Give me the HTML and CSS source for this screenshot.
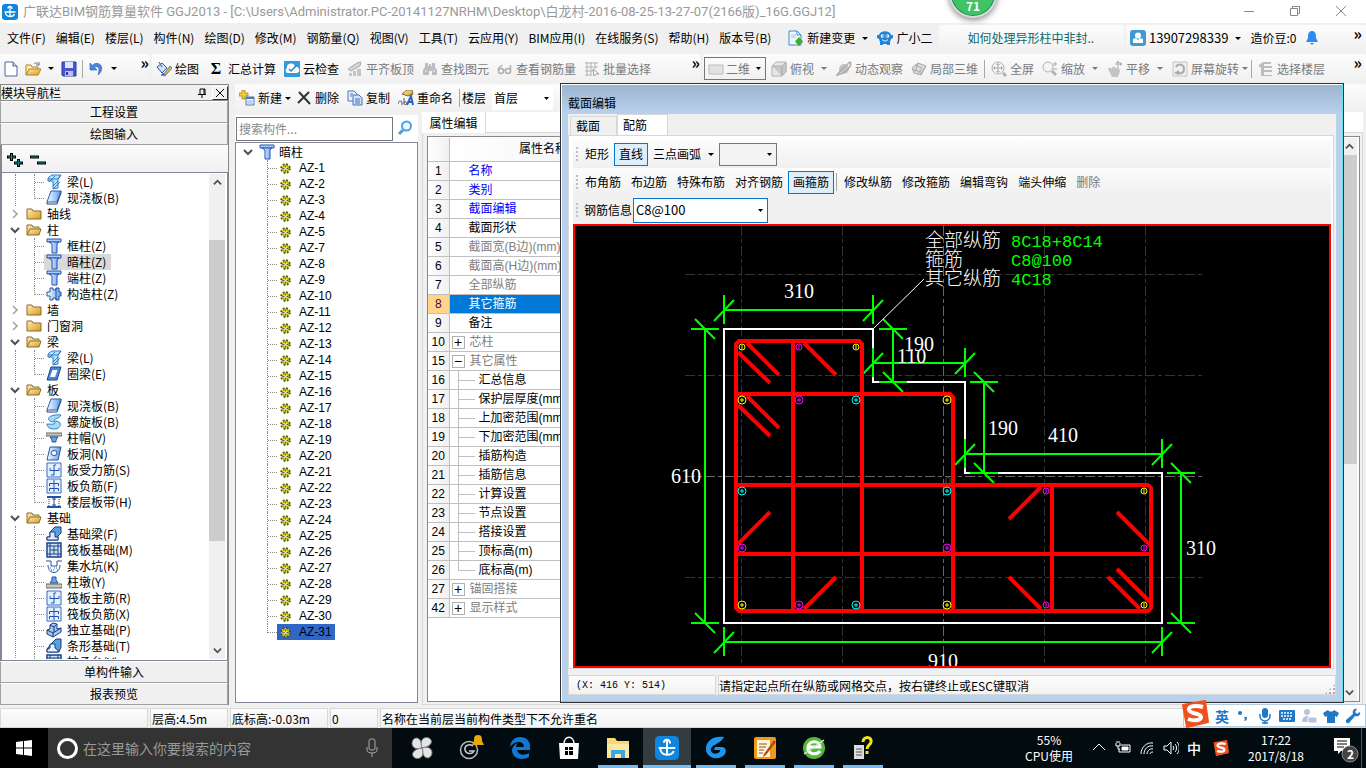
FILE: index.html
```
<!DOCTYPE html>
<html lang="zh-CN">
<head>
    <meta charset="UTF-8">
    <meta name="viewport" content="width=device-width, initial-scale=1.0">
    <title>广联达BIM钢筋算量软件 GGJ2013</title>
    <link rel="stylesheet" href="styles.css">
</head>
<body>
    <!-- Icon sprite -->
    <svg class="sprite" aria-hidden="true">
        <defs>
            <linearGradient id="gold" x1="0" y1="0" x2="1" y2="1"><stop offset="0" stop-color="#fff0b0"/><stop offset="1" stop-color="#d89820"/></linearGradient>
            <linearGradient id="blue" x1="0" y1="0" x2="1" y2="0"><stop offset="0" stop-color="#fff"/><stop offset="1" stop-color="#5a9cec"/></linearGradient>
        </defs>
        <symbol id="i-logo" viewBox="0 0 16 16"><rect width="16" height="16" rx="3" fill="#0e86e0"/><path d="M10 5V4.500a2 2 0 0 0-4 0M8 3v10M2.500 8h11M3.500 8c0 3 2 4.500 4.500 4.500s4-1 4.500-2.500" fill="none" stroke="#fff" stroke-width="1.300"/></symbol>
        <symbol id="i-new" viewBox="0 0 16 16"><path d="M2 1h8l4 4v10H2z" fill="#fff" stroke="#4a6796"/><path d="M10 1v4h4" fill="#c8daf2" stroke="#4a6796"/></symbol>
        <symbol id="i-open" viewBox="0 0 16 16"><path d="M1 14V4h5l1 2h6v2" fill="#fff0a8" stroke="#b08020"/><path d="M1 14l3-6h12l-3 6z" fill="url(#gold)" stroke="#b08020"/><path d="M9 3c2-2 4-1 5 1m0-3v3h-3" fill="none" stroke="#5878a0"/></symbol>
        <symbol id="i-save" viewBox="0 0 16 16"><path d="M1 1h14v14H2l-1-1z" fill="#4858d0" stroke="#2838a0"/><path d="M4 1h8v6H4z" fill="#dde6fa"/><path d="M4 10h8v5H4z" fill="#b8c4ee"/><path d="M5 11h2v3H5z" fill="#283890"/></symbol>
        <symbol id="i-undo" viewBox="0 0 16 16"><path d="M2 2v7h7L6.500 6.500c3-2 6 0 3.500 7.500 5-4 5-10 0-11.500C7.500 2 5.500 3 4.500 4.500z" fill="#4a86e0" stroke="#2c60b8" stroke-width=".6"/></symbol>
        <symbol id="i-draw" viewBox="0 0 16 16"><path d="M1 6l5-4 5 5-5 5z" fill="#cfe0f6" stroke="#335890"/><path d="M3 1l3 5" stroke="#335890"/><path d="M7 14l7-9 2 2-7 8z" fill="#e6b23a" stroke="#335890" stroke-width=".7"/><path d="M5 15c0-3 3-4 4-1z" fill="#2f66c0"/></symbol>
        <symbol id="i-cloud" viewBox="0 0 16 16"><rect width="16" height="16" rx="1" fill="#2f9be0"/><path d="M3 12a3 3 0 0 1 0-5 4 4 0 0 1 8-1 3 3 0 0 1 2 6z" fill="#fff"/><path d="M5 8l2 2 5-5" fill="none" stroke="#2f80d0" stroke-width="1.500"/></symbol>
        <symbol id="i-align" viewBox="0 0 16 16"><path d="M1 8l9-6 4-1-1 4-9 5z" fill="#d4d4d4" stroke="#aaa"/><path d="M2 12h3v3H2zM6 10h3v5H6zM10 8h4v7h-4z" fill="#c4c4c4"/></symbol>
        <symbol id="i-find" viewBox="0 0 16 16"><path d="M3 2h3v3h1V3h2v2h1V2h3v4l2 3v5h-5v-4H7v4H1V9l2-3z" fill="#bdbdbd"/><path d="M3 10h2m6 0h2" stroke="#eee"/></symbol>
        <symbol id="i-glasses" viewBox="0 0 16 16"><g fill="none" stroke="#b0b0b0" stroke-width="1.500"><circle cx="4" cy="10" r="2.500"/><circle cx="11" cy="10" r="2.500"/><path d="M6.500 9h2M1.500 10V7l4-3M13.500 10V4"/></g></symbol>
        <symbol id="i-batch" viewBox="0 0 16 16"><path d="M1 2h13M1 6h13M1 10h8M1 14h6M3 1v14M7 1v14M11 1v7" stroke="#b4b4b4" fill="none"/><path d="M9 8l6 5-3 0-2 2z" fill="#fff" stroke="#999"/></symbol>
        <symbol id="i-flat" viewBox="0 0 16 16"><path d="M1 4h14v9H1z" fill="#e2e2e2" stroke="#bbb"/></symbol>
        <symbol id="i-cube" viewBox="0 0 16 16"><path d="M1 5l4-4h10v10l-4 4H1z" fill="#e6e6e6" stroke="#b0b0b0"/><path d="M1 5h10v10M11 5l4-4v10l-4 4z" fill="#c8c8c8" stroke="#b0b0b0"/></symbol>
        <symbol id="i-orbit" viewBox="0 0 16 16"><circle cx="8" cy="8" r="5" fill="#c4c4c4"/><path d="M1 14C4 10 9 5 14 1c3 3-5 12-13 13z" fill="none" stroke="#aaa" stroke-width="1.500"/></symbol>
        <symbol id="i-local" viewBox="0 0 16 16"><path d="M1 7l6-5 8 3-5 9-7-2z" fill="#ddd" stroke="#aaa"/><path d="M4 4l7 3-4 6M1 8l9 3M7 2l-3 9M15 5l-6 9" fill="none" stroke="#aaa"/></symbol>
        <symbol id="i-full" viewBox="0 0 16 16"><circle cx="7" cy="7" r="6" fill="#f4f4f4" stroke="#b0b0b0"/><path d="M12 12l3 3" stroke="#b0b0b0" stroke-width="3"/><path d="M7 3v8M3 7h8" stroke="#aaa"/><path d="M7 2l-2 2h4zM7 12l-2-2h4zM2 7l2-2v4zM12 7l-2-2v4z" fill="#aaa"/></symbol>
        <symbol id="i-zoom" viewBox="0 0 16 16"><circle cx="6" cy="6" r="5" fill="#f4f4f4" stroke="#b4b4b4"/><path d="M10 10l4 4" stroke="#b4b4b4" stroke-width="3"/><path d="M13 1v4M11 3h4M11 8h4" stroke="#aaa"/></symbol>
        <symbol id="i-pan" viewBox="0 0 16 16"><path d="M1 8c1-2 3-1 4 0 0-3 3-3 3-1 2-1 5 0 5 3l-2 6H5z" fill="#c4c4c4"/><path d="M11 0v7M8 3h7" stroke="#aaa"/><path d="M11 0l-2 2h4zM15 3l-2-2v4z" fill="#aaa"/></symbol>
        <symbol id="i-rotate" viewBox="0 0 16 16"><path d="M1 1h14v14H1z" fill="#f0f0f0" stroke="#c4c4c4"/><path d="M4 6c2-4 8-3 8 2s-5 5-7 3" fill="none" stroke="#aaa" stroke-width="2"/><path d="M2 12l5-3v5z" fill="#aaa"/></symbol>
        <symbol id="i-floor" viewBox="0 0 16 16"><path d="M1 4l4-3h8v2H6v2h8v2H6v2h8v2H6v3h8v1H3V6H1z" fill="#bcbcbc"/></symbol>
        <symbol id="i-change" viewBox="0 0 16 16"><path d="M1 1h8l4 4v10H1z" fill="#f2f8ff" stroke="#3f8cc8"/><path d="M3 5h5M3 7h5" stroke="#9cc6e8"/><path d="M9 1v4h4" fill="none" stroke="#3f8cc8"/><path d="M11 7l4 4.500-4 4.500-4-4.500z" fill="#3cae28"/></symbol>
        <symbol id="i-bot" viewBox="0 0 16 16"><path d="M0 5h2c1-5 11-5 12 0h2v3l-2 1-1 3v3h-3v-1H6v1H3v-3L2 9 0 8z" fill="#1c86dc"/><circle cx="5.500" cy="6" r="1.800" fill="#fff"/><circle cx="10.500" cy="6" r="1.800" fill="#fff"/><circle cx="6" cy="6" r=".7" fill="#124"/><circle cx="10" cy="6" r=".7" fill="#124"/><path d="M5 9.500c2 2 4 2 6 0" stroke="#fff" fill="none"/></symbol>
        <symbol id="i-user" viewBox="0 0 16 16"><rect width="16" height="16" rx="3" fill="#3f9ad2"/><circle cx="8" cy="5.500" r="3" fill="#fff"/><path d="M3 13V9l3-1 2 2 2-2 3 1v4z" fill="#fff"/></symbol>
        <symbol id="i-bell" viewBox="0 0 16 16"><path d="M8 1c4 0 4 4 4 7l2 4H2l2-4c0-3 0-7 4-7zM6 13h4l-2 2z" fill="#2d8cf0"/></symbol>
        <symbol id="i-add" viewBox="0 0 16 16"><path d="M3 0h3v3h3v3H6v3H3V6H0V3h3z" fill="#f4cc30" stroke="#a07c10" stroke-width=".7"/><path d="M7 7h8v8H7z" fill="#fff" stroke="#4a78b8"/><path d="M7 7h8v2H7z" fill="#4a78b8"/><path d="M8 11h6M8 13h6" stroke="#8cacd8"/></symbol>
        <symbol id="i-del" viewBox="0 0 16 16"><path d="M3 2l11 12M13 2L2 13" stroke="#333" stroke-width="2"/></symbol>
        <symbol id="i-copy" viewBox="0 0 16 16"><path d="M1 1h6l3 3v7H1z" fill="#eaf2fe" stroke="#4a70b8"/><path d="M6 5h6l3 3v7H6z" fill="#d2e2fa" stroke="#4a70b8"/><path d="M8 9h5M8 11h5M8 13h5M3 4h3M3 6h2" stroke="#4a70b8"/></symbol>
        <symbol id="i-rename" viewBox="0 0 16 16"><path d="M4 4l5-4h5l1 4-5 2z" fill="url(#gold)" stroke="#8c6a28"/><path d="M0 14c0-4 4-3 4-2v3M6 8v6c3 2 4-3 0-2" fill="none" stroke="#555"/><path d="M9 15l4-9 2 9M10 12h4" fill="none" stroke="#2c64c0" stroke-width="2"/></symbol>
        <symbol id="i-lens" viewBox="0 0 16 16"><circle cx="9.500" cy="6" r="4.500" fill="#eef7ff" stroke="#4ca0e0" stroke-width="2"/><path d="M6 10l-4 4" stroke="#4ca0e0" stroke-width="3"/></symbol>
        <!-- Tree icons -->
        <symbol id="t-folder" viewBox="0 0 16 16"><path d="M1 13V3h5l1 2h8v8z" fill="url(#gold)" stroke="#8c6c2c"/></symbol>
        <symbol id="t-folder-open" viewBox="0 0 16 16"><path d="M1 13V3h5l1 2h6v2" fill="#f4dc90" stroke="#8c6c2c"/><path d="M1 13l3-6h11l-2 6z" fill="url(#gold)" stroke="#8c6c2c"/></symbol>
        <symbol id="t-column" viewBox="0 0 16 16"><path d="M1 1h14v3H1z" fill="#a8cdfa" stroke="#2452b0"/><path d="M3 4h10l-2 2v9H6V6z" fill="url(#blue)" stroke="#2452b0"/></symbol>
        <symbol id="t-beam" viewBox="0 0 16 16"><path d="M2 4l4-3h9l-3 4v9l-5 1V7H2z" fill="#bfe0fa" stroke="#2a7cc8"/><path d="M2 5h10l3-4M3 8L9 2M7 12l5-5M8 14l6-6" stroke="#2a7cc8" fill="none"/></symbol>
        <symbol id="t-slab" viewBox="0 0 16 16"><path d="M5 1h10l-4 11H1z" fill="url(#blue)" stroke="#2f5ca8"/><path d="M1 12v2h10l4-11V1" fill="none" stroke="#1e4890"/></symbol>
        <symbol id="t-ring" viewBox="0 0 16 16"><path d="M5 1h10l-4 13H1z" fill="#4a86dc" stroke="#1e4890"/><path d="M6.500 4h5L9 11H4z" fill="#fff"/></symbol>
        <symbol id="t-gz" viewBox="0 0 16 16"><path d="M4 2h3v2h3V2h3v4h2v4h-2v4h-3v-2H7v2H4v-4H1V6h3z" fill="url(#blue)" stroke="#2452a0"/><path d="M10 2v12" stroke="#2452a0"/></symbol>
        <symbol id="t-spiral" viewBox="0 0 16 16"><path d="M15 1C7 0 1 3 3 6s7 1 6 3-6 1-8 1c0 3 3 5 7 5 6 0 8-5 5-7S7 8 8 6s5-1 7-5z" fill="#a6dcf8" stroke="#2a80c8"/></symbol>
        <symbol id="t-cap" viewBox="0 0 16 16"><path d="M0 3h16v3H0z" fill="#c8c8bc" stroke="#666"/><path d="M4 7h8l-2 3v2H6v-2z" fill="#6ea4ea" stroke="#2452a0"/></symbol>
        <symbol id="t-hole" viewBox="0 0 16 16"><path d="M4 1h11l-3 13H1z" fill="url(#blue)" stroke="#2452a0"/><ellipse cx="8" cy="7" rx="3" ry="2.500" fill="#fff" stroke="#2452a0"/></symbol>
        <symbol id="t-bar1" viewBox="0 0 16 16"><path d="M1 1h14v14H1z" fill="#e4f0ff" stroke="#3a6cc0"/><path d="M8 3v10M4 6v2.500h9V6M8 13H5M8 3h2" fill="none" stroke="#1e50b0"/></symbol>
        <symbol id="t-bar2" viewBox="0 0 16 16"><path d="M1 1h14v14H1z" fill="#e4f0ff" stroke="#3a6cc0"/><path d="M8 2v12M3.500 8V5.500h9V8M3.500 13v-2.500h9V13" fill="none" stroke="#1e50b0"/></symbol>
        <symbol id="t-band" viewBox="0 0 16 16"><path d="M1 3h14M1 13h14" stroke="#2452a0" stroke-width="2"/><path d="M3 5v7M13 5v7" stroke="#333" stroke-dasharray="1 1"/><path d="M8 4v8M6 5h4M6 11h4" stroke="#2452a0"/></symbol>
        <symbol id="t-fbeam" viewBox="0 0 16 16"><path d="M1 14v-3h3V6l5-5h6v6l-3 3v4z" fill="#5aa0dc" stroke="#143c80"/><path d="M1 14v-3h3V6h5v5h3v3z" fill="#dcecfc" stroke="#143c80"/></symbol>
        <symbol id="t-raft" viewBox="0 0 16 16"><path d="M1 1h14v14H1z" fill="#cfe2f8" stroke="#1c4488" stroke-width="1.500"/><path d="M4 1v14M12 1v14M1 4h14M1 12h14M8 4v8M4 8h8" stroke="#1c4488" fill="none"/></symbol>
        <symbol id="t-pit" viewBox="0 0 16 16"><path d="M0 3h5v5h6V3h5M2 7c0 10 12 10 12 0" fill="none" stroke="#2452a0"/><path d="M4 10h1M7 12h1M10 10h1M8 10h1M5 12h1M11 12h1" stroke="#2452a0"/></symbol>
        <symbol id="t-pier" viewBox="0 0 16 16"><path d="M0 10h16v4H0z" fill="#c8c8bc" stroke="#666"/><path d="M6 3h4v3l2 3H4l2-3z" fill="#6ea4ea" stroke="#2452a0"/></symbol>
        <symbol id="t-indep" viewBox="0 0 16 16"><path d="M1 8l3-1V3l3-2 4 1v5l4-1v4l-8 5-6-3z" fill="#a6c8ee" stroke="#143c80"/><path d="M1 8l6 3 8-5M7 11v4M4 3l4 2v5M11 2L8 5" fill="none" stroke="#143c80"/></symbol>
        <symbol id="t-strip" viewBox="0 0 16 16"><path d="M1 14v-3l4-5 5-5h5v8l-2 5z" fill="#5aa0dc" stroke="#143c80"/><path d="M1 14v-2l3-2V6h5v4l3 2v2z" fill="#eaf3fd" stroke="#143c80"/></symbol>
        <symbol id="t-gear" viewBox="0 0 12 12"><circle cx="6" cy="6" r="4.800" fill="#f0ec30" stroke="#4c4c10" stroke-width="1.800" stroke-dasharray="2 1.800"/><circle cx="6" cy="6" r="3.300" fill="#f0ec30" stroke="#6c6c20" stroke-width=".7"/><path d="M6 3v6M3 6h6" stroke="#555"/><circle cx="6" cy="6" r="1" fill="#fff"/></symbol>
        <symbol id="s-up" viewBox="0 0 10 10"><path d="M1 7l4-4 4 4" fill="none" stroke="#505050" stroke-width="2"/></symbol>
        <symbol id="s-down" viewBox="0 0 10 10"><path d="M1 3l4 4 4-4" fill="none" stroke="#505050" stroke-width="2"/></symbol>
        <symbol id="s-right" viewBox="0 0 10 10"><path d="M3 1l4 4-4 4" fill="none" stroke="#a0a0a0" stroke-width="1.500"/></symbol>
        <symbol id="sogou" viewBox="0 0 28 28"><path d="M2 5l22-4 3 21-21 5z" fill="#f0501c" stroke="#f0501c" stroke-width="2" stroke-linejoin="round"/><path d="M22 7c-7-2-15-1-14 3s12 3 12 7-8 4-13 2" fill="none" stroke="#fff" stroke-width="4"/></symbol>
        <!-- Dimension ticks -->
        <symbol id="tick-v" viewBox="-15 -15 30 30" overflow="visible"><path d="M0-15V14M-10 11L10-10"/></symbol>
        <symbol id="tick-h" viewBox="-15 -15 30 30" overflow="visible"><path d="M-14 0H14M-10-10L10 10"/></symbol>
    </svg>

    <header class="titlebar">
        <svg class="icon"><use href="#i-logo"/></svg>
        <h1>广联达BIM钢筋算量软件 GGJ2013 - [C:\Users\Administrator.PC-20141127NRHM\Desktop\白龙村-2016-08-25-13-27-07(2166版)_16G.GGJ12]</h1>
        <div class="window-buttons">
            <button aria-label="最小化"><svg viewBox="0 0 12 12"><path d="M1 6.500h10"/></svg></button>
            <button aria-label="还原"><svg viewBox="0 0 12 12"><path d="M1.500 3.500h7v7h-7zM3.500 3V1.500h7v7H9"/></svg></button>
            <button aria-label="关闭"><svg viewBox="0 0 12 12"><path d="M1 1l10 10M11 1L1 11"/></svg></button>
        </div>
    </header>
    <div class="speed-ball">71</div>

    <nav class="menubar">
        <div class="menus">
            <button>文件(F)</button>
            <button>编辑(E)</button>
            <button>楼层(L)</button>
            <button>构件(N)</button>
            <button>绘图(D)</button>
            <button>修改(M)</button>
            <button>钢筋量(Q)</button>
            <button>视图(V)</button>
            <button>工具(T)</button>
            <button>云应用(Y)</button>
            <button>BIM应用(I)</button>
            <button>在线服务(S)</button>
            <button>帮助(H)</button>
            <button>版本号(B)</button>
        </div>
        <button class="tool"><svg class="icon"><use href="#i-change"/></svg>新建变更<i class="caret"></i></button>
        <button class="tool"><svg class="icon"><use href="#i-bot"/></svg>广小二</button>
        <div class="strip tip"><a href="#tip">如何处理异形柱中非封..</a></div>
        <div class="strip account">
            <button class="tool"><svg class="icon"><use href="#i-user"/></svg><span class="phone">13907298339</span><i class="caret"></i></button>
            <button class="tool">造价豆:0</button>
            <button class="tool" aria-label="消息"><svg class="icon"><use href="#i-bell"/></svg></button>
            <span class="more">»</span>
        </div>
    </nav>

    <div class="toolbars">
        <div class="strip files">
            <button class="tool" aria-label="新建"><svg class="icon"><use href="#i-new"/></svg></button>
            <button class="tool" aria-label="打开"><svg class="icon"><use href="#i-open"/></svg><i class="caret"></i></button>
            <button class="tool" aria-label="保存"><svg class="icon"><use href="#i-save"/></svg></button>
            <i class="sep"></i>
            <button class="tool" aria-label="撤销"><svg class="icon"><use href="#i-undo"/></svg><i class="caret"></i></button>
            <span class="more">»</span>
        </div>
        <div class="strip calc">
            <button class="tool"><svg class="icon"><use href="#i-draw"/></svg>绘图</button>
            <button class="tool"><b class="sigma">Σ</b>汇总计算</button>
            <button class="tool"><svg class="icon"><use href="#i-cloud"/></svg>云检查</button>
            <button class="tool" disabled><svg class="icon"><use href="#i-align"/></svg>平齐板顶</button>
            <button class="tool" disabled><svg class="icon"><use href="#i-find"/></svg>查找图元</button>
            <button class="tool" disabled><svg class="icon"><use href="#i-glasses"/></svg>查看钢筋量</button>
            <button class="tool" disabled><svg class="icon"><use href="#i-batch"/></svg>批量选择</button>
            <span class="more">»</span>
        </div>
        <div class="strip view">
            <div class="dimension">
                <svg class="icon"><use href="#i-flat"/></svg>
                <select aria-label="视图维度" disabled><option>二维</option></select>
            </div>
            <button class="tool" disabled><svg class="icon"><use href="#i-cube"/></svg>俯视<i class="caret"></i></button>
            <button class="tool" disabled><svg class="icon"><use href="#i-orbit"/></svg>动态观察</button>
            <button class="tool" disabled><svg class="icon"><use href="#i-local"/></svg>局部三维</button>
            <i class="sep"></i>
            <button class="tool" disabled><svg class="icon"><use href="#i-full"/></svg>全屏</button>
            <button class="tool" disabled><svg class="icon"><use href="#i-zoom"/></svg>缩放<i class="caret"></i></button>
            <button class="tool" disabled><svg class="icon"><use href="#i-pan"/></svg>平移<i class="caret"></i></button>
            <button class="tool tight" disabled><svg class="icon"><use href="#i-rotate"/></svg>屏幕旋转<i class="caret"></i></button>
            <i class="sep"></i>
            <button class="tool" disabled><svg class="icon"><use href="#i-floor"/></svg>选择楼层</button>
            <span class="more">»</span>
        </div>
    </div>

    <main class="workspace">
        <aside class="navigator">
            <div class="nav-title">
                <h2>模块导航栏</h2>
                <button aria-label="固定"><svg viewBox="0 0 10 10"><path d="M3 1h5v5M3 1v5M7 1v5M1 6.500h8M5 7v3"/></svg></button>
                <button class="close" aria-label="关闭"><svg viewBox="0 0 10 10"><path d="M1 1l8 8M9 1L1 9"/></svg></button>
            </div>
            <button class="section">工程设置</button>
            <button class="section">绘图输入</button>
            <div class="tree-tools">
                <button aria-label="全部展开"><svg viewBox="0 0 16 16"><path d="M0 5h9M4.500 1v8M7 11h9M11.500 7v8" stroke="#000" stroke-width="3"/><path d="M1 5h7M4.500 2v6M8 11h7M11.500 8v6" stroke="#0a8c8c"/></svg></button>
                <button aria-label="全部折叠"><svg viewBox="0 0 16 16"><path d="M0 5h9M7 11h9" stroke="#000" stroke-width="3"/><path d="M1 5h7M8 11h7" stroke="#0a8c8c"/></svg></button>
            </div>
            <div class="tree-box">
                <ul class="tree">
                    <li>
                        <ul>
                            <li><span><svg class="icon"><use href="#t-beam"/></svg>梁(L)</span></li>
                            <li><span><svg class="icon"><use href="#t-slab"/></svg>现浇板(B)</span></li>
                        </ul>
                    </li>
                    <li><div class="folder"><svg class="arrow"><use href="#s-right"/></svg><svg class="icon"><use href="#t-folder"/></svg>轴线</div></li>
                    <li>
                        <div class="folder"><svg class="arrow"><use href="#s-down"/></svg><svg class="icon"><use href="#t-folder-open"/></svg>柱</div>
                        <ul>
                            <li><span><svg class="icon"><use href="#t-column"/></svg>框柱(Z)</span></li>
                            <li><span class="current"><svg class="icon"><use href="#t-column"/></svg>暗柱(Z)</span></li>
                            <li><span><svg class="icon"><use href="#t-column"/></svg>端柱(Z)</span></li>
                            <li><span><svg class="icon"><use href="#t-gz"/></svg>构造柱(Z)</span></li>
                        </ul>
                    </li>
                    <li><div class="folder"><svg class="arrow"><use href="#s-right"/></svg><svg class="icon"><use href="#t-folder"/></svg>墙</div></li>
                    <li><div class="folder"><svg class="arrow"><use href="#s-right"/></svg><svg class="icon"><use href="#t-folder"/></svg>门窗洞</div></li>
                    <li>
                        <div class="folder"><svg class="arrow"><use href="#s-down"/></svg><svg class="icon"><use href="#t-folder-open"/></svg>梁</div>
                        <ul>
                            <li><span><svg class="icon"><use href="#t-beam"/></svg>梁(L)</span></li>
                            <li><span><svg class="icon"><use href="#t-ring"/></svg>圈梁(E)</span></li>
                        </ul>
                    </li>
                    <li>
                        <div class="folder"><svg class="arrow"><use href="#s-down"/></svg><svg class="icon"><use href="#t-folder-open"/></svg>板</div>
                        <ul>
                            <li><span><svg class="icon"><use href="#t-slab"/></svg>现浇板(B)</span></li>
                            <li><span><svg class="icon"><use href="#t-spiral"/></svg>螺旋板(B)</span></li>
                            <li><span><svg class="icon"><use href="#t-cap"/></svg>柱帽(V)</span></li>
                            <li><span><svg class="icon"><use href="#t-hole"/></svg>板洞(N)</span></li>
                            <li><span><svg class="icon"><use href="#t-bar1"/></svg>板受力筋(S)</span></li>
                            <li><span><svg class="icon"><use href="#t-bar2"/></svg>板负筋(F)</span></li>
                            <li><span><svg class="icon"><use href="#t-band"/></svg>楼层板带(H)</span></li>
                        </ul>
                    </li>
                    <li>
                        <div class="folder"><svg class="arrow"><use href="#s-down"/></svg><svg class="icon"><use href="#t-folder-open"/></svg>基础</div>
                        <ul>
                            <li><span><svg class="icon"><use href="#t-fbeam"/></svg>基础梁(F)</span></li>
                            <li><span><svg class="icon"><use href="#t-raft"/></svg>筏板基础(M)</span></li>
                            <li><span><svg class="icon"><use href="#t-pit"/></svg>集水坑(K)</span></li>
                            <li><span><svg class="icon"><use href="#t-pier"/></svg>柱墩(Y)</span></li>
                            <li><span><svg class="icon"><use href="#t-bar1"/></svg>筏板主筋(R)</span></li>
                            <li><span><svg class="icon"><use href="#t-bar2"/></svg>筏板负筋(X)</span></li>
                            <li><span><svg class="icon"><use href="#t-indep"/></svg>独立基础(P)</span></li>
                            <li><span><svg class="icon"><use href="#t-strip"/></svg>条形基础(T)</span></li>
                            <li><span><svg class="icon"><use href="#t-raft"/></svg>桩承台(V)</span></li>
                        </ul>
                    </li>
                </ul>
                <div class="scrollbar">
                    <svg><use href="#s-up"/></svg>
                    <div class="track nav-track"><div class="thumb"></div></div>
                    <svg><use href="#s-down"/></svg>
                </div>
            </div>
            <button class="section">单构件输入</button>
            <button class="section">报表预览</button>
        </aside>

        <section class="components">
            <div class="strip component-tools">
                <button class="tool tight"><svg class="icon"><use href="#i-add"/></svg>新建<i class="caret"></i></button>
                <button class="tool"><svg class="icon"><use href="#i-del"/></svg>删除</button>
                <button class="tool"><svg class="icon"><use href="#i-copy"/></svg>复制</button>
                <button class="tool"><svg class="icon"><use href="#i-rename"/></svg>重命名</button>
                <i class="sep"></i>
                <label for="floor">楼层</label>
                <select id="floor"><option>首层</option></select>
            </div>
            <div class="columns">
                <div class="objects">
                    <div class="search">
                        <input type="text" placeholder="搜索构件..." aria-label="搜索构件">
                        <button aria-label="搜索"><svg class="icon"><use href="#i-lens"/></svg></button>
                    </div>
                    <div class="object-list">
                        <div class="object-root"><svg class="arrow"><use href="#s-down"/></svg><svg class="icon"><use href="#t-column"/></svg>暗柱</div>
                        <ul>
                            <li><span><svg><use href="#t-gear"/></svg>AZ-1</span></li>
                            <li><span><svg><use href="#t-gear"/></svg>AZ-2</span></li>
                            <li><span><svg><use href="#t-gear"/></svg>AZ-3</span></li>
                            <li><span><svg><use href="#t-gear"/></svg>AZ-4</span></li>
                            <li><span><svg><use href="#t-gear"/></svg>AZ-5</span></li>
                            <li><span><svg><use href="#t-gear"/></svg>AZ-7</span></li>
                            <li><span><svg><use href="#t-gear"/></svg>AZ-8</span></li>
                            <li><span><svg><use href="#t-gear"/></svg>AZ-9</span></li>
                            <li><span><svg><use href="#t-gear"/></svg>AZ-10</span></li>
                            <li><span><svg><use href="#t-gear"/></svg>AZ-11</span></li>
                            <li><span><svg><use href="#t-gear"/></svg>AZ-12</span></li>
                            <li><span><svg><use href="#t-gear"/></svg>AZ-13</span></li>
                            <li><span><svg><use href="#t-gear"/></svg>AZ-14</span></li>
                            <li><span><svg><use href="#t-gear"/></svg>AZ-15</span></li>
                            <li><span><svg><use href="#t-gear"/></svg>AZ-16</span></li>
                            <li><span><svg><use href="#t-gear"/></svg>AZ-17</span></li>
                            <li><span><svg><use href="#t-gear"/></svg>AZ-18</span></li>
                            <li><span><svg><use href="#t-gear"/></svg>AZ-19</span></li>
                            <li><span><svg><use href="#t-gear"/></svg>AZ-20</span></li>
                            <li><span><svg><use href="#t-gear"/></svg>AZ-21</span></li>
                            <li><span><svg><use href="#t-gear"/></svg>AZ-22</span></li>
                            <li><span><svg><use href="#t-gear"/></svg>AZ-23</span></li>
                            <li><span><svg><use href="#t-gear"/></svg>AZ-24</span></li>
                            <li><span><svg><use href="#t-gear"/></svg>AZ-25</span></li>
                            <li><span><svg><use href="#t-gear"/></svg>AZ-26</span></li>
                            <li><span><svg><use href="#t-gear"/></svg>AZ-27</span></li>
                            <li><span><svg><use href="#t-gear"/></svg>AZ-28</span></li>
                            <li><span><svg><use href="#t-gear"/></svg>AZ-29</span></li>
                            <li><span><svg><use href="#t-gear"/></svg>AZ-30</span></li>
                            <li><span class="chosen"><svg><use href="#t-gear"/></svg>AZ-31</span></li>
                        </ul>
                    </div>
                </div>

                <div class="properties">
                    <div class="property-tabs"><button>属性编辑</button></div>
                    <div class="property-page">
                        <div class="property-grid">
                            <table>
                                <colgroup><col class="col-no"><col class="col-name"><col></colgroup>
                                <thead><tr><th></th><th>属性名称</th><th></th></tr></thead>
                                <tbody>
                                    <tr><th>1</th><td class="key">名称</td><td></td></tr>
                                    <tr><th>2</th><td class="key">类别</td><td></td></tr>
                                    <tr><th>3</th><td class="key">截面编辑</td><td></td></tr>
                                    <tr><th>4</th><td>截面形状</td><td></td></tr>
                                    <tr><th>5</th><td class="dim">截面宽(B边)(mm)</td><td></td></tr>
                                    <tr><th>6</th><td class="dim">截面高(H边)(mm)</td><td></td></tr>
                                    <tr><th>7</th><td class="dim">全部纵筋</td><td></td></tr>
                                    <tr class="selected"><th>8</th><td>其它箍筋</td><td></td></tr>
                                    <tr><th>9</th><td>备注</td><td></td></tr>
                                    <tr><th>10</th><td class="group dim"><button aria-label="展开">+</button>芯柱</td><td></td></tr>
                                    <tr><th>15</th><td class="group dim"><button aria-label="收起">−</button>其它属性</td><td></td></tr>
                                    <tr><th>16</th><td class="sub">汇总信息</td><td></td></tr>
                                    <tr><th>17</th><td class="sub">保护层厚度(mm)</td><td></td></tr>
                                    <tr><th>18</th><td class="sub">上加密范围(mm)</td><td></td></tr>
                                    <tr><th>19</th><td class="sub">下加密范围(mm)</td><td></td></tr>
                                    <tr><th>20</th><td class="sub">插筋构造</td><td></td></tr>
                                    <tr><th>21</th><td class="sub">插筋信息</td><td></td></tr>
                                    <tr><th>22</th><td class="sub">计算设置</td><td></td></tr>
                                    <tr><th>23</th><td class="sub">节点设置</td><td></td></tr>
                                    <tr><th>24</th><td class="sub">搭接设置</td><td></td></tr>
                                    <tr><th>25</th><td class="sub">顶标高(m)</td><td></td></tr>
                                    <tr><th>26</th><td class="sub last">底标高(m)</td><td></td></tr>
                                    <tr><th>27</th><td class="group dim"><button aria-label="展开">+</button>锚固搭接</td><td></td></tr>
                                    <tr><th>42</th><td class="group dim"><button aria-label="展开">+</button>显示样式</td><td></td></tr>
                                </tbody>
                            </table>
                            <div class="scrollbar">
                                <svg><use href="#s-up"/></svg>
                                <div class="track grid-track"><div class="thumb"></div></div>
                                <svg><use href="#s-down"/></svg>
                            </div>
                        </div>
                    </div>
                </div>
            </div>
        </section>

        <!-- Section editor window -->
        <section class="dialog">
            <h2>截面编辑</h2>
            <div class="client">
                <div class="tabs">
                    <button>截面</button>
                    <button class="active">配筋</button>
                </div>
                <div class="page">
                    <div class="strip bar">
                        <i class="grip"></i>
                        <button>矩形</button>
                        <button class="on">直线</button>
                        <button>三点画弧<i class="caret"></i></button>
                        <select class="arc" aria-label="画弧方式" disabled><option></option></select>
                    </div>
                    <div class="strip bar">
                        <i class="grip"></i>
                        <button>布角筋</button>
                        <button>布边筋</button>
                        <button>特殊布筋</button>
                        <button>对齐钢筋</button>
                        <button class="on">画箍筋</button>
                        <i class="sep"></i>
                        <button>修改纵筋</button>
                        <button>修改箍筋</button>
                        <button>编辑弯钩</button>
                        <button>端头伸缩</button>
                        <button disabled>删除</button>
                    </div>
                    <div class="bar">
                        <i class="grip"></i>
                        <label for="rebar">钢筋信息</label>
                        <select id="rebar"><option>C8@100</option></select>
                    </div>
                    <svg class="canvas" viewBox="575 226 754 440">
                        <g class="grid">
                            <path d="M741.500 226v440M842.500 226v440M1044.500 226v440M1145.500 226v440M685 274.500h519M685 375.500h519M685 577.500h519"/>
                            <path class="axis" d="M943.500 226v440M685 476.500h519"/>
                            <text x="945" y="485">0</text>
                        </g>
                        <path class="outline" d="M724 329h149v53h92v91h197v150H724z"/>
                        <g class="dims">
                            <path d="M724 310h149M705 329v294M893 329v53M873 363h92M984 382v91M965 454h197M1181 473v150M724 642h438"/>
                            <use href="#tick-v" x="709" y="295" width="30" height="30"/>
                            <use href="#tick-v" x="858" y="295" width="30" height="30"/>
                            <use href="#tick-v" x="858" y="348" width="30" height="30"/>
                            <use href="#tick-v" x="950" y="348" width="30" height="30"/>
                            <use href="#tick-v" x="950" y="439" width="30" height="30"/>
                            <use href="#tick-v" x="1147" y="439" width="30" height="30"/>
                            <use href="#tick-v" x="709" y="627" width="30" height="30"/>
                            <use href="#tick-v" x="1147" y="627" width="30" height="30"/>
                            <use href="#tick-h" x="690" y="314" width="30" height="30"/>
                            <use href="#tick-h" x="690" y="608" width="30" height="30"/>
                            <use href="#tick-h" x="878" y="314" width="30" height="30"/>
                            <use href="#tick-h" x="878" y="367" width="30" height="30"/>
                            <use href="#tick-h" x="969" y="367" width="30" height="30"/>
                            <use href="#tick-h" x="969" y="458" width="30" height="30"/>
                            <use href="#tick-h" x="1166" y="458" width="30" height="30"/>
                            <use href="#tick-h" x="1166" y="608" width="30" height="30"/>
                        </g>
                        <g class="stirrups">
                            <path d="M739 341h120l3 3v264l-3 3H739l-3-3V344z"/>
                            <path d="M736 394h214l3 3v214M736 485h412l3 3v120l-3 3H859"/>
                            <path d="M793 341v270M736 554h415M1052 485v126"/>
                            <path d="M747 343l32 32M738 352l32 31M747 396l32 32M738 405l32 31M804 343l32 32M738 544l32-32M804 609l32-32M1041 487l-32 32M1117 512l33 33M1009 577l32 32M1117 569l33 33M1108 577l32 32"/>
                        </g>
                        <g class="bars yellow">
                            <circle cx="742" cy="347" r="3"/><circle cx="856" cy="347" r="3"/><circle cx="742" cy="400" r="4"/><circle cx="947" cy="400" r="4"/>
                            <circle cx="742" cy="605" r="4"/><circle cx="947" cy="605" r="4"/><circle cx="1144" cy="491" r="3"/><circle cx="1144" cy="605" r="3"/>
                            <path d="M742 345v4M856 345v4M740 400h4M742 398v4M945 400h4M947 398v4M740 605h4M742 603v4M945 605h4M947 603v4M1144 489v4M1144 603v4"/>
                        </g>
                        <g class="bars magenta">
                            <circle cx="799" cy="347" r="3"/><circle cx="799" cy="400" r="4"/><circle cx="742" cy="548" r="4"/><circle cx="947" cy="548" r="4"/>
                            <circle cx="799" cy="605" r="4"/><circle cx="1046" cy="491" r="3"/><circle cx="1144" cy="548" r="3"/><circle cx="1046" cy="605" r="3"/>
                            <path d="M799 345v4M797 400h4M799 398v4M740 548h4M742 546v4M945 548h4M947 546v4M797 605h4M799 603v4M1046 489v4M1144 546v4M1046 603v4"/>
                        </g>
                        <g class="bars cyan">
                            <circle cx="856" cy="400" r="4"/><circle cx="742" cy="491" r="4"/><circle cx="947" cy="491" r="4"/><circle cx="856" cy="605" r="4"/>
                            <path d="M854 400h4M856 398v4M740 491h4M742 489v4M945 491h4M947 489v4M854 605h4M856 603v4"/>
                        </g>
                        <path class="leader" d="M873 329l51-50"/>
                        <g class="labels">
                            <text x="784" y="298">310</text>
                            <text x="904" y="351">190</text>
                            <text x="897" y="363">110</text>
                            <text x="671" y="483">610</text>
                            <text x="988" y="435">190</text>
                            <text x="1048" y="442">410</text>
                            <text x="1186" y="555">310</text>
                            <text x="928" y="668">910</text>
                        </g>
                        <g class="legend">
                            <text x="925" y="247">全部纵筋</text>
                            <text x="925" y="266">箍筋</text>
                            <text x="925" y="285">其它纵筋</text>
                            <text class="value" x="1011" y="247">8C18+8C14</text>
                            <text class="value" x="1011" y="266">C8@100</text>
                            <text class="value" x="1011" y="285">4C18</text>
                        </g>
                    </svg>
                </div>
                <div class="hint">
                    <span class="coords">(X: 416 Y: 514)</span>
                    <span class="message">请指定起点所在纵筋或网格交点，按右键终止或ESC键取消</span>
                    <i class="resize"></i>
                </div>
            </div>
        </section>
    </main>

    <footer class="statusbar">
        <span class="cell blank"></span>
        <span class="cell height">层高:4.5m</span>
        <span class="cell bottom">底标高:-0.03m</span>
        <span class="cell count">0</span>
        <span class="cell note">名称在当前层当前构件类型下不允许重名</span>
    </footer>

    <!-- Input method bar -->
    <div class="ime">
        <svg class="ime-logo"><use href="#sogou"/></svg>
        <b>英</b>
        <svg viewBox="0 0 16 16"><circle cx="5" cy="5" r="2"/><path d="M9 9h3c0 3-1 4-3 4 1-1 1-2 0-4z"/></svg>
        <svg viewBox="0 0 16 16"><rect x="5" y="0" width="6" height="10" rx="3"/><path d="M3 6v2a5 5 0 0 0 10 0V6M8 13v3M5 15h6" fill="none" stroke="#1f78c8" stroke-width="1.500"/></svg>
        <svg viewBox="0 0 16 16"><rect y="2" width="16" height="12" rx="1"/><path d="M2 5h12M2 8h12M4 11h8" stroke="#fff" stroke-width="1.500" stroke-dasharray="2 1"/></svg>
        <svg viewBox="0 0 16 16" class="faded"><circle cx="6" cy="4" r="3"/><path d="M1 14c0-8 10-8 10 0z"/><rect x="7" y="9" width="9" height="6" rx="1" stroke="#fff"/></svg>
        <svg viewBox="0 0 16 16"><path d="M5 2c1 2 5 2 6 0l5 3-2 4-2-1v7H4V8L2 9 0 5z"/></svg>
        <svg viewBox="0 0 16 16"><path d="M15 4l-3 2-2-2 2-3C9 0 7 3 8 6l-7 6c-1 2 1 4 3 3l6-7c3 1 6-1 5-4z"/></svg>
    </div>

    <footer class="taskbar">
        <button class="start" aria-label="开始"><svg viewBox="0 0 16 16"><path d="M0 2l7-1v6.500H0zM8 1l8-1v7.500H8zM0 8.500h7V15l-7-1zM8 8.500h8V16l-8-1z" fill="#fff"/></svg></button>
        <div class="cortana">
            <i class="ring"></i>
            <input type="text" placeholder="在这里输入你要搜索的内容" aria-label="搜索">
            <svg viewBox="0 0 16 20"><rect x="5" y="1" width="6" height="11" rx="2"/><path d="M3 9v3c0 4 10 4 10 0V9M8 15v4"/></svg>
        </div>
        <div class="apps">
            <button aria-label="花瓣"><svg viewBox="0 0 24 24"><g fill="#e4e4e4" stroke="#777"><path d="M12 12C4 15 0 9 3 4c3-4 9-2 9 8z"/><path d="M12 12C9 4 14 0 19 2c5 3 2 9-7 10z"/><path d="M12 12c8-3 12 3 9 8-3 4-9 2-9-8z"/><path d="M12 12c3 8-2 12-7 10-5-3-2-9 7-10z"/></g></svg></button>
            <button aria-label="消息"><svg viewBox="0 0 24 24"><circle cx="10" cy="14" r="8.500" fill="none" stroke="#bbb" stroke-width="1.500"/><path d="M14 10c-4-3-9 0-8 4s7 5 9 1h-5" fill="none" stroke="#ccc" stroke-width="1.500"/><path d="M19-1c4 0 4 3 4 6l2 4H13l2-4c0-3 0-6 4-6z" fill="#e8a808"/></svg></button>
            <button aria-label="Edge"><svg viewBox="0 0 24 24"><path d="M2 11C3 4 7 1 12 1c8 0 11 6 10 13H9c1 5 7 6 12 3v4c-7 4-16 2-17-6 0-4 3-7 6-8-1 1-2 2-2 4h8c0-6-9-7-14 0z" fill="#0e78d4"/></svg></button>
            <button aria-label="应用商店"><svg viewBox="0 0 24 24"><path d="M2 7h20l-1 16H3z" fill="#fff"/><path d="M7 8c0-9 10-9 10 0" fill="none" stroke="#fff" stroke-width="1.500"/><path d="M8 11h3v3H8zM12 11h4v3h-4zM8 15h3v4H8zM12 15h4v4h-4z" fill="#000"/></svg></button>
            <button class="running" aria-label="文件资源管理器"><svg viewBox="0 0 24 24"><path d="M1 2h8l2 3h12v17H1z" fill="#f8d878"/><path d="M1 8h22v14H1z" fill="#fce8a0"/><path d="M5 22v-8h14v8h-4v-4H9v4z" fill="#38a8e0"/></svg></button>
            <button class="running focus" aria-label="GGJ2013"><svg viewBox="0 0 16 16"><use href="#i-logo"/></svg></button>
            <button class="running" aria-label="广联达"><svg viewBox="0 0 24 24"><path d="M20 1C9-1 1 6 2 14s13 12 19 4c2-4 0-7-3-7h-7l-1 3h6c1 3-7 6-9 1-1-7 9-6 13-14z" fill="#1c94f0"/></svg></button>
            <button class="running" aria-label="记事"><svg viewBox="0 0 24 24"><rect x="1" y="1" width="22" height="22" rx="2" fill="#f09a18"/><path d="M4 4h13v17H4z" fill="#fff4dc"/><path d="M6 8h8M6 11h7M6 14h5M6 17h4" stroke="#98501c"/><path d="M21 4L11 18l-1 3 3-2L23 6z" fill="#b44a14"/></svg></button>
            <button class="running" aria-label="浏览器"><svg viewBox="0 0 24 24"><circle cx="12" cy="12" r="11" fill="#58b83c"/><path d="M6 11h12c0-7-11-7-12 0s8 9 12 4" fill="none" stroke="#fff" stroke-width="3"/><path d="M2 18C8 14 16 8 22 4" stroke="#d8f0c8" stroke-width="1.500"/></svg></button>
            <button class="running" aria-label="帮助"><svg viewBox="0 0 24 24"><path d="M3 9h10v14H3z" fill="#ddd"/><path d="M5 13h6M5 16h6M5 19h6" stroke="#555"/><path d="M12 6c0-6 9-6 8 0 0 3-4 3-4 7M16 15v3" fill="none" stroke="#f4e410" stroke-width="3"/></svg></button>
        </div>
        <div class="cpu"><span>55%</span><span>CPU使用</span></div>
        <div class="tray">
            <svg viewBox="0 0 16 16"><path d="M2 10l6-6 6 6"/></svg>
            <svg viewBox="0 0 16 16"><path d="M6 5h9v7H4V9M1 3v3h4V3M3 6v3h2M2 1v2M4 1v2"/><path d="M7 7h6v3H7z" fill="#fff"/></svg>
            <svg viewBox="0 0 16 16"><path d="M2 14C2 7 8 2 14 3M5 14c0-5 4-9 9-8M8 14c0-3 3-6 6-5M11 14c0-1 1-2 3-2"/></svg>
            <svg viewBox="0 0 16 16"><path d="M1 6h3l4-4v12l-4-4H1zM10 6c1 1 1 3 0 4M12 4c2 2 2 6 0 8M14 2c3 3 3 9 0 12"/></svg>
            <b>中</b>
            <svg class="sogou"><use href="#sogou"/></svg>
        </div>
        <div class="clock"><span>17:22</span><span>2017/8/18</span></div>
        <button class="notify" aria-label="通知"><svg viewBox="0 0 26 26"><path d="M1 1h16v13H8l-3 3v-3H1z" fill="#fff"/><path d="M4 4h10M4 7h10M4 10h7" stroke="#000"/><circle cx="17" cy="17" r="8" fill="#444" stroke="#888"/></svg><span class="badge">2</span></button>
        <i class="desktop"></i>
    </footer>
</body>
</html>
```

FILE: styles.css
```
* {
    box-sizing: border-box;
}

body {
    margin: 0;
    height: 100vh;
    display: flex;
    flex-direction: column;
    overflow: hidden;
    position: relative;
    background: #f0f0f0;
    color: #000;
    font: 12px/16px "Noto Sans CJK SC", sans-serif;
}

button,
input,
select {
    font: inherit;
    color: inherit;
    border: 0;
    padding: 0;
    background: none;
}

h1,
h2 {
    margin: 0;
    font-size: 12px;
    font-weight: normal;
}

ul {
    list-style: none;
    margin: 0;
    padding: 0;
}

select {
    appearance: none;
    border-radius: 0;
    opacity: 1;
    background: #fff url("data:image/svg+xml,%3Csvg xmlns='http://www.w3.org/2000/svg' width='5' height='3'%3E%3Cpath d='M0 0h5L2.5 3z'/%3E%3C/svg%3E") no-repeat right 4px center;
}

button:disabled,
select:disabled {
    color: #7a7a7a;
}

.sprite {
    position: absolute;
    width: 0;
    height: 0;
}

.icon {
    width: 16px;
    height: 16px;
    flex: none;
}

.arrow {
    width: 10px;
    height: 10px;
    flex: none;
}

.caret {
    border: 3px solid transparent;
    border-top-color: currentColor;
    border-bottom: 0;
    margin: 0 1px 0 4px;
}

.sep {
    width: 1px;
    height: 18px;
    margin: 0 2px;
    background: #a8a8a8;
    flex: none;
}

.strip {
    display: flex;
    align-items: center;
    background: linear-gradient(#fcfcfc, #f0f0f0);
    border-radius: 2px;
}

.tool {
    display: flex;
    align-items: center;
    gap: 3px;
    padding: 0 4px;
    height: 24px;
    white-space: nowrap;
}

.tool.tight {
    padding-right: 0;
}

.tight .caret {
    margin-left: 0;
}

.more {
    align-self: flex-start;
    margin-left: auto;
    font-size: 16px;
    font-weight: bold;
}

/* Title bar */
.titlebar {
    display: flex;
    align-items: center;
    gap: 5px;
    height: 23px;
    padding: 0 2px;
    background: #fff;
    color: #999;
}

.titlebar h1 {
    flex: 1;
    font-family: Roboto, "Noto Sans CJK SC", sans-serif;
    font-size: 13px;
    white-space: nowrap;
}

.window-buttons {
    display: flex;
}

.window-buttons button {
    width: 46px;
    height: 22px;
}

.window-buttons svg {
    width: 12px;
    height: 12px;
    fill: none;
    stroke: #888;
}

.speed-ball {
    position: absolute;
    top: -30px;
    left: 949px;
    width: 48px;
    height: 48px;
    border: 2px solid #d8d8d8;
    border-radius: 50%;
    background: #40c463;
    box-shadow: 0 2px 6px #888, inset 0 0 0 1px #148a50;
    color: #fff;
    font-weight: bold;
    line-height: 68px;
    text-align: center;
}

/* Menu bar */
.menubar {
    display: flex;
    align-items: center;
    height: 30px;
    padding-left: 2px;
}

.menus {
    display: flex;
    margin-right: 8px;
}

.menus button {
    padding: 0 5px;
    white-space: nowrap;
}

.tip {
    flex: 1;
    height: 27px;
    margin-left: 3px;
    padding-left: 28px;
}

.tip a {
    color: #0a6a6a;
    text-decoration: none;
    white-space: nowrap;
}

.account {
    height: 27px;
    width: 240px;
    margin-left: 2px;
    padding-right: 4px;
}

.phone {
    font-size: 13px;
}

/* Tool bars */
.toolbars {
    display: flex;
    gap: 3px;
    height: 30px;
    padding-top: 1px;
}

.files {
    width: 149px;
}

.files .tool {
    padding: 0 3px;
}

.calc {
    width: 548px;
}

.view {
    flex: 1;
    padding-right: 4px;
}

.sigma {
    width: 18px;
    font: bold 16px "Liberation Serif", serif;
}

.dimension {
    display: flex;
    align-items: center;
    gap: 2px;
    width: 62px;
    height: 23px;
    margin: 0 1px;
    padding-left: 3px;
    border: 1px solid #777;
}

.dimension select {
    flex: 1;
    background-color: transparent;
}

/* Work area */
.workspace {
    position: relative;
    flex: 1;
    min-height: 0;
    display: flex;
    gap: 6px;
    padding: 1px 0 2px;
}

.navigator {
    display: flex;
    flex-direction: column;
    width: 229px;
    border-right: 1px solid #888;
}

.nav-title {
    display: flex;
    align-items: center;
    height: 17px;
    border: 1px solid #888;
    border-right: 0;
}

.nav-title h2 {
    flex: 1;
}

.nav-title button {
    display: flex;
    align-items: center;
    justify-content: center;
    width: 16px;
    height: 14px;
}

.nav-title .close {
    border: 1px solid #fff;
    border-right-color: #333;
    border-bottom-color: #333;
    margin-left: 2px;
}

.nav-title svg {
    width: 10px;
    height: 10px;
    fill: none;
    stroke: #000;
}

.section {
    height: 22px;
    border: 1px solid #a0a0a0;
    border-top-color: #fff;
    flex: none;
}

.tree-tools {
    display: flex;
    align-items: center;
    gap: 7px;
    height: 27px;
    padding: 2px 5px 0;
    border-left: 2px solid #888;
    background: linear-gradient(#fcfcfc, #f0f0f0);
}

.tree-tools svg {
    display: block;
    width: 16px;
    height: 16px;
}

.tree-box {
    flex: 1;
    min-height: 0;
    display: flex;
    border: 1px solid #82879a;
    border-left-width: 2px;
    padding: 1px 2px 1px 1px;
    background: #fff;
}

.tree {
    flex: 1;
    overflow: hidden;
    white-space: nowrap;
}

.folder,
.tree ul li,
.tree ul span {
    display: flex;
    align-items: center;
    height: 16px;
}

.folder {
    padding-left: 7px;
}

.folder .icon {
    margin: 0 5px 0 6px;
}

.tree ul {
    margin-left: 12px;
    padding-left: 18px;
    border-left: 1px dotted #888;
}

/* Dotted branch in front of every leaf */
.tree ul li::before,
.object-list li::before {
    content: "";
    width: 9px;
    height: 16px;
    border-left: 1px dotted #888;
    background: repeating-linear-gradient(90deg, #888 0 1px, transparent 1px 2px) 0 8px / 100% 1px no-repeat;
}

.tree ul li:last-child::before,
.object-list li:last-child::before {
    height: 9px;
    align-self: flex-start;
}

.tree ul span {
    gap: 5px;
    padding: 0 5px 0 2px;
}

.tree .current {
    background: #d9d9d9;
}

.scrollbar {
    display: flex;
    flex-direction: column;
    align-items: center;
    width: 16px;
    flex: none;
    background: #f0f0f0;
}

.scrollbar svg {
    width: 9px;
    height: 17px;
    flex: none;
}

.track {
    flex: 1;
    width: 100%;
}

.thumb {
    background: #cdcdcd;
}

.nav-track {
    padding-top: 49px;
}

.nav-track .thumb {
    height: 301px;
}

.grid-track .thumb {
    height: 309px;
}

/* Components */
.components {
    flex: 1;
    min-width: 0;
    display: flex;
    flex-direction: column;
}

.component-tools {
    height: 28px;
    flex: none;
}

.component-tools select {
    width: 61px;
    height: 24px;
    margin-left: 6px;
    padding: 0 2px;
}

.columns {
    flex: 1;
    min-height: 0;
    display: flex;
    gap: 4px;
}

.objects {
    display: flex;
    flex-direction: column;
    width: 183px;
    padding: 3px 0 2px;
}

.search {
    display: flex;
    gap: 4px;
    height: 27px;
    padding: 2px 0 1px 1px;
    background: #fff;
}

.search input {
    width: 157px;
    padding: 0 2px;
    border: 1px solid #777;
    background: #fff;
}

.search input::placeholder {
    color: #888;
}

.object-list {
    flex: 1;
    border: 1px solid #82879a;
    background: #fff;
    overflow: hidden;
}

.object-root {
    display: flex;
    align-items: center;
    height: 17px;
    padding: 1px 0 0 7px;
}

.object-root .icon {
    margin: 0 4px 0 6px;
}

.object-list li {
    display: flex;
    height: 16px;
    padding-left: 31px;
}

.object-list span {
    display: flex;
    align-items: center;
    gap: 8px;
    padding: 0 3px;
    font-family: "Liberation Sans", sans-serif;
}

.object-list span svg {
    width: 11px;
    height: 11px;
}

.object-list .chosen {
    background: #3167c4;
}

/* Property grid */
.properties {
    flex: 1;
    min-width: 0;
    display: flex;
    flex-direction: column;
    padding-right: 3px;
}

.property-tabs {
    height: 21px;
    background: #fff;
    border-bottom: 1px solid #d8d8d8;
}

.property-tabs button {
    height: 21px;
    width: 64px;
    background: #fff;
    border-right: 1px solid #d8d8d8;
}

.property-page {
    flex: 1;
    min-height: 0;
    display: flex;
    padding: 3px 2px 2px 4px;
    border: 1px solid #d8d8d8;
    border-top: 0;
}

.property-grid {
    flex: 1;
    min-width: 0;
    display: flex;
    align-items: stretch;
    overflow: hidden;
    border: 1px solid #888;
    padding: 1px 2px 0 0;
    background: #fff;
}

.property-grid table {
    flex: 1;
    align-self: flex-start;
    width: 100%;
    table-layout: fixed;
    border-collapse: collapse;
}

.col-no {
    width: 21px;
}

.col-name {
    width: 188px;
}

.property-grid th,
.property-grid td {
    height: 19px;
    padding: 0;
    border-right: 1px solid #c0c0c0;
    border-bottom: 1px solid #c0c0c0;
    line-height: 16px;
    font-weight: normal;
}

.property-grid th {
    background: linear-gradient(90deg, #fff, #f0f0f0);
    font-family: "Liberation Sans", "Noto Sans CJK SC", sans-serif;
}

.property-grid thead th {
    height: 23px;
}

.property-grid td {
    padding-left: 19px;
    font-family: "Liberation Sans", "Noto Sans CJK SC", sans-serif;
    white-space: nowrap;
}

.property-grid .key {
    color: #00f;
}

.property-grid .dim {
    color: #808080;
}

.property-grid .selected td {
    background: #0078d7;
    color: #fff;
}

.property-grid .selected th {
    background: #ffd58c;
    color: #600040;
}

.property-grid .group {
    padding-left: 2px;
}

.group button {
    width: 13px;
    height: 13px;
    margin-right: 5px;
    border: 1px solid #b0b0b0;
    background: #fff;
    color: #000;
    font: 14px/10px "Liberation Sans", sans-serif;
    vertical-align: middle;
}

/* Branch lines of nested properties */
.property-grid .sub {
    padding-left: 29px;
    background:
        linear-gradient(#c0c0c0, #c0c0c0) 8px 0 / 1px 100% no-repeat,
        linear-gradient(#c0c0c0, #c0c0c0) 8px 9px / 17px 1px no-repeat;
}

.property-grid .sub.last {
    background-size: 1px 10px, 17px 1px;
}

/* Section editor */
.dialog {
    position: absolute;
    top: 0;
    right: 22px;
    bottom: 4px;
    left: 560px;
    display: flex;
    flex-direction: column;
    padding: 0 7px 7px;
    border: 1px solid #333;
    background: linear-gradient(#9ab4d0, #b9d1ea 30px);
    box-shadow: inset -1px -1px #5ce0f0, inset 1px 1px #fff;
}

.dialog h2 {
    height: 30px;
    line-height: 37px;
}

.client {
    flex: 1;
    min-height: 0;
    display: flex;
    flex-direction: column;
    background: #f0f0f0;
}

.tabs {
    display: flex;
    align-items: flex-end;
    height: 21px;
    padding-left: 2px;
}

.tabs button {
    width: 47px;
    height: 19px;
    padding-left: 5px;
    border: 1px solid #d8d8d8;
    border-bottom: 0;
    text-align: left;
}

.tabs .active {
    width: 51px;
    height: 21px;
    background: #fff;
}

.page {
    flex: 1;
    min-height: 0;
    display: flex;
    flex-direction: column;
    margin-right: 2px;
    padding: 4px 2px 0 4px;
    border: 1px solid #d8d8d8;
    background: #fff;
}

.bar {
    display: flex;
    align-items: center;
    height: 28px;
    flex: none;
    background-color: #f0f0f0;
}

.bar button {
    height: 23px;
    padding: 0 5px;
    white-space: nowrap;
    display: flex;
    align-items: center;
}

.bar button .caret {
    margin: 0 0 0 7px;
}

.bar .on {
    border: 1px solid #0078d7;
    padding: 0 4px;
    background: #e0eef9;
}

.grip {
    width: 2px;
    height: 15px;
    margin: 0 2px 0 3px;
    background: repeating-linear-gradient(#c0c0c0 0 2px, transparent 2px 4px);
}

.bar label {
    padding-left: 4px;
}

.arc {
    width: 58px;
    height: 23px;
    border: 1px solid #777;
    background-color: #f4f4f4;
}

#rebar {
    width: 135px;
    height: 25px;
    margin-left: 1px;
    padding: 0 2px;
    border: 1px solid #0078d7;
    font-size: 13px;
}

.canvas {
    flex: 1;
    min-height: 0;
    width: 100%;
    border: 2px solid #f00;
    background: #000;
}

.grid path {
    stroke: #333;
    stroke-dasharray: 10 3 4 3;
}

.grid .axis {
    stroke: #666;
}

.grid text {
    fill: #444;
    font: 12px "Liberation Serif", serif;
}

.outline {
    fill: none;
    stroke: #fff;
    stroke-width: 2;
}

.dims {
    fill: none;
    stroke: #0f0;
    stroke-width: 2;
}

.stirrups {
    fill: none;
    stroke: #f00;
    stroke-width: 4;
}

.bars {
    fill: #000;
    stroke-width: 1;
}

.yellow {
    stroke: #ff0;
}

.magenta {
    stroke: #f0f;
}

.cyan {
    stroke: #0ff;
}

.leader {
    stroke: #fff;
}

.labels {
    fill: #fff;
    font: 20px "Liberation Serif", serif;
}

.legend {
    fill: #fff;
    font: 300 19px "Noto Sans CJK SC", sans-serif;
}

.legend .value {
    fill: #0f0;
    font: 17px "Liberation Mono", monospace;
}

.hint {
    display: flex;
    align-items: stretch;
    height: 20px;
    margin-top: 6px;
}

.coords,
.message,
.cell {
    border: 1px solid #d8d8d8;
    background: linear-gradient(#fcfcfc, #f2f2f2);
    line-height: 19px;
    white-space: nowrap;
}

.coords {
    width: 148px;
    padding-left: 7px;
    font-family: "Liberation Mono", monospace;
    font-size: 10px;
}

.message {
    flex: 1;
    margin-left: 2px;
}

.resize {
    width: 12px;
    margin-left: -12px;
    background: radial-gradient(#aaa 1px, transparent 1px) 0 0 / 4px 4px;
    clip-path: polygon(100% 40%, 100% 100%, 0 100%);
}

/* Status bar */
.statusbar {
    display: flex;
    gap: 2px;
    height: 21px;
    padding-top: 1px;
}

.cell {
    padding-left: 1px;
}

.blank {
    width: 148px;
}

.height {
    width: 78px;
}

.bottom {
    width: 98px;
}

.count {
    width: 48px;
}

.note {
    flex: 1;
}

.ime {
    position: absolute;
    right: 0;
    bottom: 41px;
    display: flex;
    align-items: center;
    gap: 6px;
    width: 183px;
    height: 23px;
    padding-right: 4px;
    border: 1px solid #b8cce0;
    background: #fff;
    color: #1f78c8;
    fill: #1f78c8;
}

.ime svg {
    width: 16px;
    height: 16px;
    flex: none;
}

.ime .ime-logo {
    width: 28px;
    height: 28px;
    margin: -4px 0 0 -3px;
}

.ime b {
    font-size: 14px;
}

.ime .faded {
    fill: #b8c4dc;
}

/* Task bar */
.taskbar {
    display: flex;
    align-items: stretch;
    height: 40px;
    background: #020c10;
    color: #fff;
}

.start {
    width: 48px;
    background: #000;
}

.start svg {
    display: block;
    width: 16px;
    height: 16px;
    margin: auto;
}

.cortana {
    display: flex;
    align-items: center;
    gap: 5px;
    width: 344px;
    padding: 0 12px 0 9px;
    background: #333;
}

.cortana input {
    flex: 1;
    font-size: 14px;
}

.cortana input::placeholder {
    color: #999;
}

.cortana svg {
    width: 16px;
    height: 20px;
    fill: none;
    stroke: #aaa;
}

.ring {
    width: 21px;
    height: 21px;
    border: 3px solid #fff;
    border-radius: 50%;
}

.apps {
    display: flex;
    flex: 1;
    gap: 1px;
    padding-left: 6px;
}

.apps button {
    width: 48px;
    display: flex;
    align-items: center;
    justify-content: center;
}

.apps svg {
    width: 24px;
    height: 24px;
    overflow: visible;
}

.apps .running {
    background: linear-gradient(#76b9ed, #76b9ed) center bottom / 40px 3px no-repeat;
}

.apps .focus {
    background-color: #333c40;
    background-size: 48px 3px;
}

.cpu,
.clock {
    display: flex;
    flex-direction: column;
    justify-content: center;
    align-items: center;
}

.cpu {
    width: 60px;
    margin-right: 12px;
}

.tray {
    display: flex;
    align-items: center;
    gap: 8px;
}

.tray svg {
    width: 16px;
    height: 16px;
    fill: none;
    stroke: #fff;
}

.tray b {
    font-size: 14px;
    font-weight: 500;
}

.tray .sogou {
    stroke: none;
    margin-left: 4px;
}

.clock {
    width: 94px;
}

.notify {
    position: relative;
    width: 38px;
}

.notify svg {
    display: block;
    width: 26px;
    height: 26px;
    margin: 4px 0 0 10px;
}

.badge {
    position: absolute;
    top: 18px;
    right: 7px;
    font-weight: bold;
}

.desktop {
    width: 5px;
    border-left: 1px solid #555;
}
```
